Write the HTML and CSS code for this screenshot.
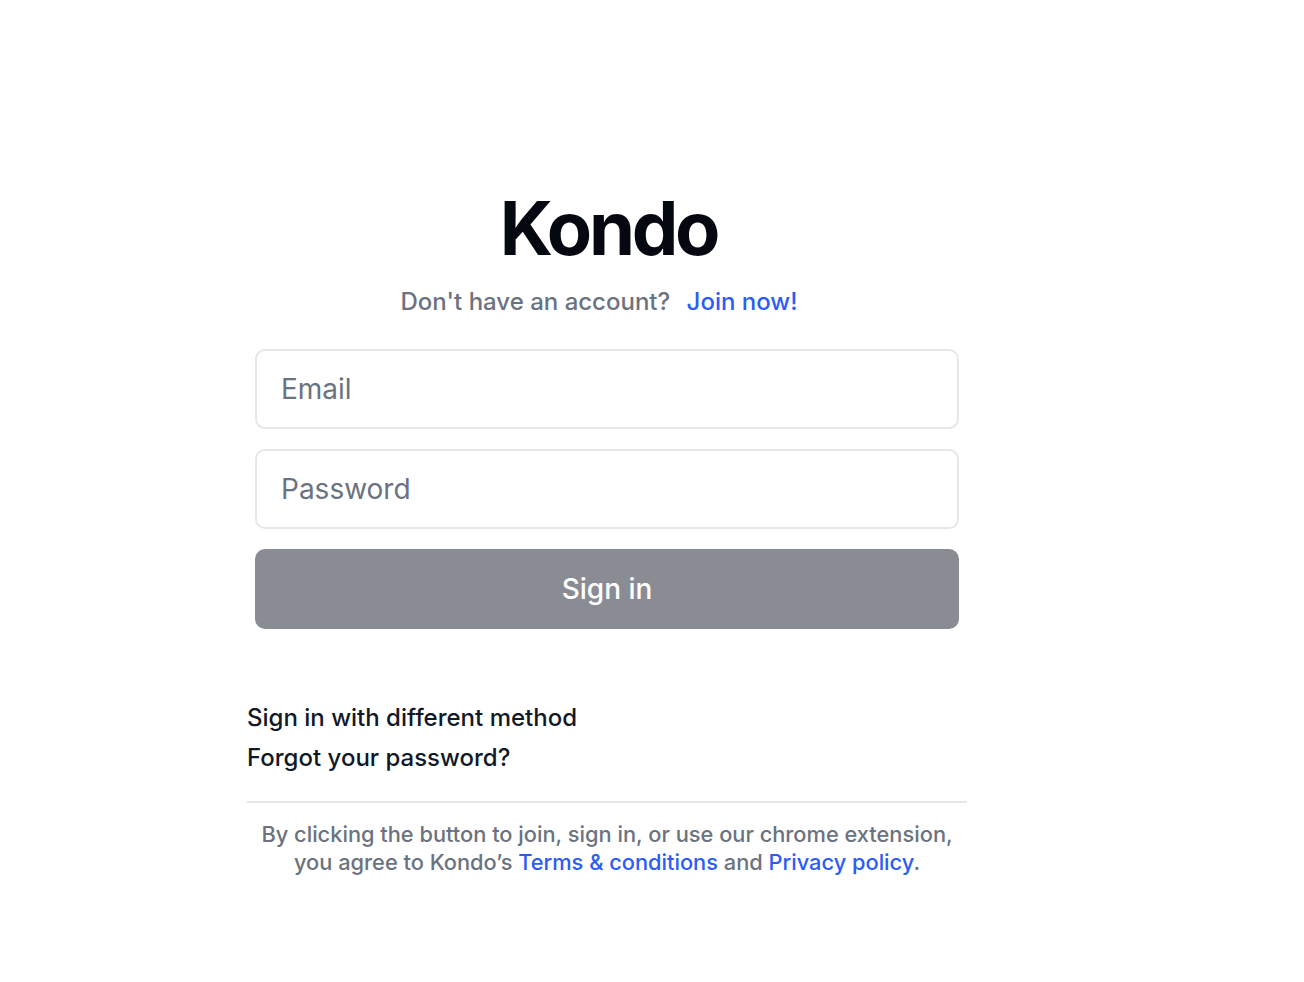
FILE: index.html
```html
<!DOCTYPE html>
<html>
<head>
<meta charset="utf-8">
<link rel="stylesheet" href="styles.css">
</head>
<body>
<main class="page">
  <div class="card">
    <h1 class="title">Kondo</h1>
    <p class="join">Don't have an account? <a class="link join-link" href="#">Join now!</a></p>
    <form class="form">
      <input class="field" type="email" placeholder="Email">
      <input class="field" type="password" placeholder="Password">
      <button class="submit" type="button">Sign in</button>
    </form>
    <div class="alt">
      <a class="alt-link" href="#">Sign in with different method</a>
      <a class="alt-link" href="#">Forgot your password?</a>
    </div>
    <hr class="divider">
    <p class="legal">By clicking the button to join, sign in, or use our chrome extension,<br>you agree to Kondo’s <a class="link" href="#">Terms &amp; conditions</a> and <a class="link" href="#">Privacy policy</a>.</p>
  </div>
</main>
</body>
</html>
```
FILE: styles.css
```css
* { box-sizing: border-box; }
html, body { margin: 0; padding: 0; background: #fff; }
body { font-family: Inter, "Noto Sans", sans-serif; color: #111827; }
.page { padding: 188px 0 0 247px; }
.card { width: 720px; display: flex; flex-direction: column; }
.title { margin: 0; padding-left: 3px; text-align: center; font-size: 74px; line-height: 80px; font-weight: 700; color: #050810; letter-spacing: -3.3px; }
.join { margin: 19px 0 0; padding-right: 16px; text-align: center; font-size: 24px; line-height: 30px; color: #6b7280; font-weight: 500; }
.join-link { margin-left: 10px; }
.link { color: #2b5cf5; text-decoration: none; }
.form { margin: 32px 8px 0; display: flex; flex-direction: column; gap: 20px; }
.field { height: 80px; border: 2px solid #e5e7eb; border-radius: 10px; padding: 0 24px; font-family: inherit; font-size: 28px; color: #111827; background: #fff; outline: none; }
.field::placeholder { color: #6b7280; }
.submit { height: 80px; border: none; border-radius: 10px; background: #8a8c93; color: #fff; font-family: inherit; font-size: 28px; font-weight: 500; }
.alt { margin-top: 74px; display: flex; flex-direction: column; gap: 10px; }
.alt-link { font-size: 24px; line-height: 30px; color: #111827; text-decoration: none; font-weight: 500; }
.divider { margin: 28px 0 0; border: none; border-top: 2px solid #e5e7eb; width: 720px; }
.legal { margin: 17px 0 0; text-align: center; font-size: 21.8px; line-height: 28px; color: #6b7280; font-weight: 500; }
```
